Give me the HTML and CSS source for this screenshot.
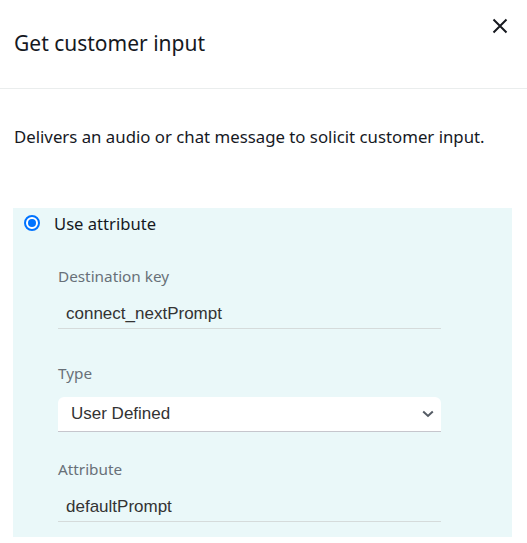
FILE: index.html
```html
<!DOCTYPE html>
<html>
<head>
<meta charset="utf-8">
<link rel="stylesheet" href="styles.css">
</head>
<body>
<div class="modal">
  <header class="header">
    <h1 class="title">Get customer input</h1>
    <button class="close" aria-label="Close">
      <svg width="16" height="16" viewBox="0 0 16 16"><path d="M1.5 1.5 L14.5 14.5 M14.5 1.5 L1.5 14.5" stroke="#16191f" stroke-width="2" fill="none"/></svg>
    </button>
  </header>
  <p class="desc">Delivers an audio or chat message to solicit customer input.</p>
  <section class="panel">
    <label class="radio-row">
      <span class="radio"><span class="dot"></span></span>
      <span class="radio-label">Use attribute</span>
    </label>
    <div class="fields">
      <div class="field field-input">
        <div class="label">Destination key</div>
        <div class="input">connect_nextPrompt</div>
      </div>
      <div class="field field-select">
        <div class="label">Type</div>
        <div class="select">
          <span>User Defined</span>
          <svg width="12" height="8" viewBox="0 0 12 8"><path d="M1.2 1.5 L6 6 L10.8 1.5" stroke="#545b64" stroke-width="2" fill="none"/></svg>
        </div>
      </div>
      <div class="field field-input">
        <div class="label">Attribute</div>
        <div class="input">defaultPrompt</div>
      </div>
    </div>
  </section>
</div>
</body>
</html>
```
FILE: styles.css
```css
* { box-sizing: border-box; }
html, body { margin: 0; padding: 0; background: #fff; }
body {
  font-family: "Noto Sans", "Open Sans", sans-serif;
  color: #16191f;
  width: 527px;
}
.header {
  height: 89px;
  border-bottom: 1px solid #eaeded;
  display: flex;
  justify-content: space-between;
  align-items: flex-start;
  padding: 0 14px;
}
.title {
  margin: 0;
  margin-top: 28px;
  font-size: 21px;
  font-weight: 400;
  line-height: 30px;
}
.close {
  border: 0;
  background: none;
  padding: 0;
  margin-top: 18px;
  margin-right: 5px;
  width: 16px;
  height: 16px;
  display: flex;
}
.desc {
  margin: 0;
  padding: 36px 14px 0;
  font-size: 16.8px;
  line-height: 24px;
}
.panel {
  margin: 59px 15px 0 13px;
  background: #eaf8f9;
  padding: 5px 0 15px;
}
.radio-row {
  display: flex;
  align-items: center;
  height: 20px;
  padding-left: 11px;
}
.radio {
  width: 16px;
  height: 16px;
  border: 2px solid #0073ff;
  border-radius: 50%;
  display: flex;
  align-items: center;
  justify-content: center;
  background: #fff;
}
.dot {
  width: 8px;
  height: 8px;
  border-radius: 50%;
  background: #0073ff;
}
.radio-label {
  margin-left: 14px;
  font-size: 16.6px;
}
.fields {
  padding-left: 45px;
  width: 428px;
  display: flex;
  flex-direction: column;
  margin-top: 33px;
}
.field-input + .field { margin-top: 34px; }
.field-select + .field { margin-top: 27px; }
.label {
  font-size: 15.3px;
  color: #687078;
  line-height: 20px;
}
.input {
  font-family: "Liberation Sans", Arial, sans-serif;
  font-size: 17px;
  color: #333;
  margin-top: 7px;
  padding: 11px 8px 4px;
  border-bottom: 1px solid #d5dbdb;
  line-height: 20px;
}
.select {
  margin-top: 14px;
  background: #fff;
  border-radius: 6px 6px 0 0;
  border-bottom: 1px solid #c6c6cd;
  height: 35px;
  display: flex;
  align-items: center;
  justify-content: space-between;
  padding: 0 7px 0 13px;
  font-family: "Liberation Sans", Arial, sans-serif;
  font-size: 17px;
  color: #333;
}
```
